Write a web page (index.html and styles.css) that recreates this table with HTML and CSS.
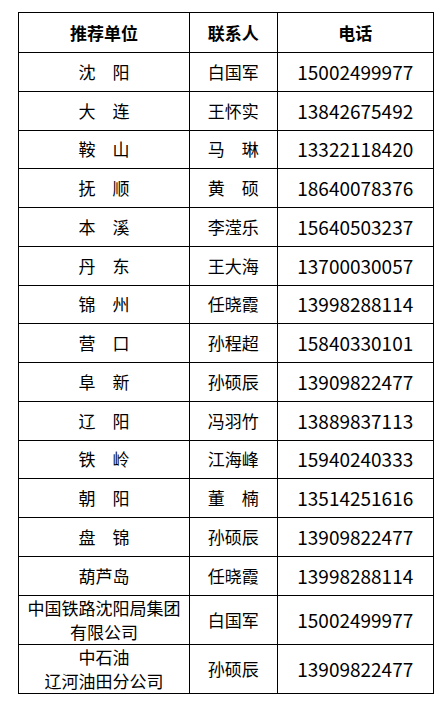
FILE: index.html
```html
<!DOCTYPE html>
<html lang="zh-CN">
<head>
<meta charset="utf-8">
<title>推荐单位联系表</title>
<link rel="stylesheet" href="styles.css">
</head>
<body>
<div class="page">
<table class="contacts">
  <colgroup>
    <col class="c-unit">
    <col class="c-name">
    <col class="c-phone">
  </colgroup>
  <thead>
    <tr class="head"><th>推荐单位</th><th>联系人</th><th>电话</th></tr>
  </thead>
  <tbody>
    <tr><td>沈　阳</td><td>白国军</td><td class="phone">15002499977</td></tr>
    <tr><td>大　连</td><td>王怀实</td><td class="phone">13842675492</td></tr>
    <tr><td>鞍　山</td><td>马　琳</td><td class="phone">13322118420</td></tr>
    <tr><td>抚　顺</td><td>黄　硕</td><td class="phone">18640078376</td></tr>
    <tr><td>本　溪</td><td>李滢乐</td><td class="phone">15640503237</td></tr>
    <tr><td>丹　东</td><td>王大海</td><td class="phone">13700030057</td></tr>
    <tr><td>锦　州</td><td>任晓霞</td><td class="phone">13998288114</td></tr>
    <tr><td>营　口</td><td>孙程超</td><td class="phone">15840330101</td></tr>
    <tr><td>阜　新</td><td>孙硕辰</td><td class="phone">13909822477</td></tr>
    <tr><td>辽　阳</td><td>冯羽竹</td><td class="phone">13889837113</td></tr>
    <tr><td>铁　岭</td><td>江海峰</td><td class="phone">15940240333</td></tr>
    <tr><td>朝　阳</td><td>董　楠</td><td class="phone">13514251616</td></tr>
    <tr><td>盘　锦</td><td>孙硕辰</td><td class="phone">13909822477</td></tr>
    <tr><td>葫芦岛</td><td>任晓霞</td><td class="phone">13998288114</td></tr>
    <tr class="tall"><td>中国铁路沈阳局集团<br>有限公司</td><td>白国军</td><td class="phone">15002499977</td></tr>
    <tr class="tall"><td>中石油<br>辽河油田分公司</td><td>孙硕辰</td><td class="phone">13909822477</td></tr>
  </tbody>
</table>
</div>
</body>
</html>
```
FILE: styles.css
```css
html, body {
  margin: 0;
  padding: 0;
  background: #ffffff;
}
.page {
  padding: 12px 0 0 18px;
}
.contacts {
  border-collapse: collapse;
  width: 415px;
  table-layout: fixed;
  font-family: "Noto Sans CJK SC", "Noto Sans", sans-serif;
  font-size: 17px;
  color: #000000;
}
.c-unit { width: 171px; }
.c-name { width: 87.5px; }
.c-phone { width: 156.5px; }
.contacts th,
.contacts td {
  border: 1px solid #000000;
  text-align: center;
  vertical-align: middle;
  padding: 0;
  line-height: 24px;
  font-weight: normal;
}
.contacts th {
  font-weight: bold;
  height: 39px;
}
.contacts td {
  height: 37.76px;
}
.contacts tr.tall td {
  height: 48px;
}
.contacts td.phone {
  font-size: 19px;
  letter-spacing: 0;
}
```
